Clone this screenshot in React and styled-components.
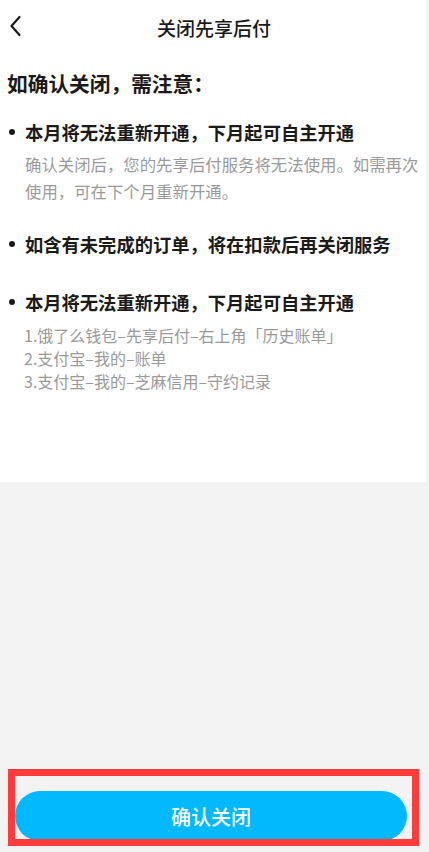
import React from "react";
import styled, { createGlobalStyle } from "styled-components";

const GlobalStyle = createGlobalStyle`
  html, body {
    margin: 0;
    padding: 0;
    background: #f3f3f3;
  }
  body {
    font-family: "Noto Sans CJK SC", "Noto Sans", sans-serif;
    -webkit-font-smoothing: antialiased;
  }
`;

const notices = [
  {
    title: "本月将无法重新开通，下月起可自主开通",
    desc: ["确认关闭后，您的先享后付服务将无法使用。如需再次使用，可在下个月重新开通。"],
    gap: 22,
  },
  {
    title: "如含有未完成的订单，将在扣款后再关闭服务",
    gap: 26,
  },
  {
    title: "本月将无法重新开通，下月起可自主开通",
    list: [
      "1.饿了么钱包–先享后付–右上角「历史账单」",
      "2.支付宝–我的–账单",
      "3.支付宝–我的–芝麻信用–守约记录",
    ],
    gap: 32,
  },
];

function App() {
  return (
    <>
      <GlobalStyle />
      <Screen>
        <Sheet>
          <Header>
            <BackButton aria-label="返回">
              <svg width="14" height="22" viewBox="0 0 14 22" fill="none">
                <polyline
                  points="10.5,2 2.5,11 10.5,20"
                  stroke="#1a1a1a"
                  strokeWidth="2.2"
                  strokeLinecap="round"
                  strokeLinejoin="round"
                />
              </svg>
            </BackButton>
            <Title>关闭先享后付</Title>
          </Header>
          <Heading>如确认关闭，需注意：</Heading>
          {notices.map((n, i) => (
            <Item key={i} $gap={n.gap}>
              <ItemTitle>
                <Dot />
                <span>{n.title}</span>
              </ItemTitle>
              {n.desc && <Desc>{n.desc}</Desc>}
              {n.list && (
                <List>
                  {n.list.map((l) => (
                    <li key={l}>{l}</li>
                  ))}
                </List>
              )}
            </Item>
          ))}
        </Sheet>
        <Spacer />
        <Footer>
          <ConfirmButton>确认关闭</ConfirmButton>
          <Highlight />
        </Footer>
      </Screen>
    </>
  );
}

export default App;

const Screen = styled.div`
  display: flex;
  flex-direction: column;
  min-height: 100vh;
`;

const Sheet = styled.div`
  background: #fff;
  width: calc(100% - 3px);
  padding-bottom: 89px;
`;

const Header = styled.div`
  height: 54px;
  display: flex;
  align-items: center;
  justify-content: center;
  position: relative;
`;

const BackButton = styled.button`
  position: absolute;
  left: 9px;
  top: 15px;
  padding: 0;
  border: 0;
  background: none;
  display: flex;
`;

const Title = styled.div`
  font-size: 19px;
  font-weight: 500;
  color: #1a1a1a;
  margin-left: 2px;
`;

const Heading = styled.h1`
  margin: 15px 0 0;
  padding-left: 7px;
  font-size: 20.7px;
  line-height: 28px;
  font-weight: 700;
  color: #1a1a1a;
`;

const Item = styled.div`
  margin-top: ${(p) => p.$gap}px;
`;

const ItemTitle = styled.div`
  display: flex;
  align-items: center;
  gap: 10px;
  padding-left: 9px;
  font-size: 18.3px;
  line-height: 26px;
  font-weight: 700;
  color: #1a1a1a;
`;

const Dot = styled.span`
  width: 6px;
  height: 6px;
  border-radius: 50%;
  background: #1a1a1a;
  flex-shrink: 0;
`;

const Desc = styled.p`
  margin: 6px 0 0;
  padding: 0 1px 0 25px;
  font-size: 16.4px;
  line-height: 27px;
  color: #9a9a9a;
`;

const List = styled.ul`
  list-style: none;
  margin: 9px 0 0;
  padding: 0 0 0 24px;
  font-size: 16px;
  line-height: 23px;
  color: #9a9a9a;
`;

const Spacer = styled.div`
  flex: 1;
`;

const Footer = styled.div`
  position: relative;
  padding: 22px 22px 11px 15px;
`;

const ConfirmButton = styled.button`
  width: 100%;
  height: 50px;
  border: 0;
  border-radius: 25px;
  background: #02b9fe;
  color: #fff;
  font-family: "Noto Sans CJK SC", sans-serif;
  font-size: 20px;
  font-weight: 500;
`;

const Highlight = styled.div`
  position: absolute;
  left: 8px;
  right: 10px;
  top: 0;
  bottom: 6px;
  border: 7px solid #ff3b3b;
  pointer-events: none;
`;
